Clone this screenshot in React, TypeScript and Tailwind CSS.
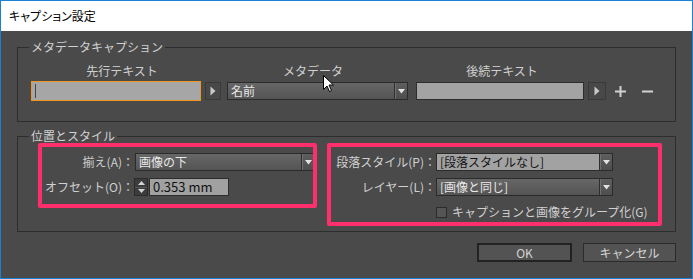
import React from 'react';

function DownTriangle() {
  return (
    <svg width="7" height="5" viewBox="0 0 7 5">
      <polygon points="0,0 7,0 3.5,4.5" fill="#e2e2e2" />
    </svg>
  );
}

function RightArrowButton({ className = '' }: { className?: string }) {
  return (
    <div
      className={`flex h-[18px] items-center justify-center border border-[#3a3a3a] bg-[#484848] ${className}`}
    >
      <svg width="6" height="10" viewBox="0 0 6 10">
        <polygon points="0.5,0.5 5.5,5 0.5,9.5" fill="#c9c9c9" />
      </svg>
    </div>
  );
}

function Dropdown({
  text,
  className = '',
  light = false,
}: {
  text: string;
  className?: string;
  light?: boolean;
}) {
  return (
    <div className={`flex h-[18px] border border-[#2b2b2b] ${className}`}>
      <div
        className={
          light
            ? 'flex flex-1 items-center bg-[#a2a2a2] pl-[3px] text-[12px] leading-[16px] text-[#161616]'
            : 'flex flex-1 items-center bg-gradient-to-b from-[#676767] to-[#545454] pl-[3px] text-[12px] leading-[16px] text-[#e8e8e8]'
        }
      >
        {text}
      </div>
      <div className="w-px bg-[#2e2e2e]" />
      <div className="w-px bg-[#707070]" />
      <div className="flex w-[11px] items-center justify-center bg-gradient-to-b from-[#5e5e5e] to-[#4e4e4e]">
        <DownTriangle />
      </div>
    </div>
  );
}

function Label({ children, className = '' }: { children: React.ReactNode; className?: string }) {
  return <div className={`text-[12px] leading-[16px] text-[#d0d0d0] ${className}`}>{children}</div>;
}

export default function App() {
  return (
    <div className="relative flex h-[279px] w-[693px] flex-col overflow-hidden border border-[#1a82d6] font-['Noto_Sans_CJK_JP',sans-serif]">
      {/* title bar */}
      <div className="flex h-[30px] items-center bg-white pl-2 text-[12px] leading-[16px] text-black [font-feature-settings:'palt']">
        キャプション設定
      </div>

      {/* body */}
      <div className="flex flex-1 flex-col bg-[#4a4a4a] px-4 pt-2">
        {/* metadata caption group */}
        <fieldset className="m-0 border border-[#2d2d2d] p-0 pb-[20px]">
          <legend className="ml-[11px] px-[2px] text-[12px] leading-4 text-[#d0d0d0]">
            メタデータキャプション
          </legend>
          <div className="mt-[8px] flex h-4">
            <Label className="ml-[13px] w-[182px] text-center">先行テキスト</Label>
            <Label className="ml-[14px] w-[172px] text-center">メタデータ</Label>
            <Label className="ml-[16px] w-[174px] text-center">後続テキスト</Label>
          </div>
          <div className="mt-[2px] flex h-[20px] items-center">
            <div className="ml-[13px] flex h-[20px] w-[170px] items-center border border-[#f0961e] bg-[#a6a6a6] pl-[3px]">
              <div className="h-[14px] w-px bg-[#474747]" />
            </div>
            <RightArrowButton className="ml-[4px] w-[16px]" />
            <Dropdown text="名前" className="ml-[6px] w-[181px]" />
            <div className="ml-[8px] h-[18px] w-[168px] border border-[#2d2d2d] bg-[#a3a3a3]" />
            <RightArrowButton className="ml-[4px] w-[18px]" />
            <svg className="ml-[9px]" width="11" height="11" viewBox="0 0 11 11">
              <rect x="0" y="4.5" width="11" height="2" fill="#d2d2d2" />
              <rect x="4.5" y="0" width="2" height="11" fill="#d2d2d2" />
            </svg>
            <svg className="ml-[16px]" width="11" height="11" viewBox="0 0 11 11">
              <rect x="0" y="4.5" width="11" height="2" fill="#d2d2d2" />
            </svg>
          </div>
        </fieldset>

        {/* position and style group */}
        <fieldset className="m-0 mt-[6px] border border-[#2d2d2d] p-0 pb-[10px]">
          <legend className="ml-[11px] px-[2px] text-[12px] leading-4 text-[#d0d0d0]">
            位置とスタイル
          </legend>
          <div className="flex pt-[9px]">
            {/* left column */}
            <div className="flex w-[308px] flex-col gap-[7px]">
              <div className="flex h-[18px] items-center">
                <Label className="w-[116px] text-right">揃え(A)：</Label>
                <Dropdown text="画像の下" className="ml-px w-[180px]" />
              </div>
              <div className="flex h-[18px] items-center">
                <Label className="w-[116px] text-right">オフセット(O)：</Label>
                <div className="flex h-[18px] w-[14px] flex-col border border-[#2b2b2b] bg-[#3c3c3c]">
                  <div className="flex flex-1 items-center justify-center">
                    <svg width="7" height="4" viewBox="0 0 7 4">
                      <polygon points="0,4 7,4 3.5,0" fill="#d4d4d4" />
                    </svg>
                  </div>
                  <div className="h-px bg-[#555555]" />
                  <div className="flex flex-1 items-center justify-center">
                    <svg width="7" height="4" viewBox="0 0 7 4">
                      <polygon points="0,0 7,0 3.5,4" fill="#d4d4d4" />
                    </svg>
                  </div>
                </div>
                <div className="ml-px flex h-[18px] w-[80px] items-center border border-[#2d2d2d] bg-[#a1a1a1] pl-[3px] text-[13px] leading-[16px] text-[#111111]">
                  0.353 mm
                </div>
              </div>
            </div>

            {/* right column */}
            <div className="flex flex-col gap-[7px]">
              <div className="flex h-[18px] items-center">
                <Label className="w-[110px] text-right">段落スタイル(P)：</Label>
                <Dropdown text="[段落スタイルなし]" light className="w-[177px]" />
              </div>
              <div className="flex h-[18px] items-center">
                <Label className="w-[110px] text-right">レイヤー(L)：</Label>
                <Dropdown text="[画像と同じ]" className="w-[177px]" />
              </div>
              <div className="flex h-[18px] items-center">
                <div className="ml-[110px] h-[11px] w-[11px] border border-[#2b2b2b] bg-[#555555]" />
                <Label className="ml-[5px]">キャプションと画像をグループ化(G)</Label>
              </div>
            </div>
          </div>
        </fieldset>

        {/* buttons */}
        <div className="mt-[11px] flex justify-end gap-[11px]">
          <button className="flex h-[19px] w-[95px] items-center justify-center border-2 border-[#222222] bg-[#535353] text-[12px] leading-[16px] text-[#d4d4d4]">
            OK
          </button>
          <button className="flex h-[19px] w-[93px] items-center justify-center border border-[#2b2b2b] bg-[#535353] text-[12px] leading-[16px] text-[#d4d4d4]">
            キャンセル
          </button>
        </div>
      </div>

      {/* annotation highlights */}
      <div className="absolute left-[37px] top-[142px] h-[65px] w-[279px] rounded-[2px] border-4 border-[#ff2f6e]" />
      <div className="absolute left-[326px] top-[142px] h-[83px] w-[335px] rounded-[2px] border-4 border-[#ff2f6e]" />

      {/* mouse pointer */}
      <svg className="absolute left-[322px] top-[74px]" width="12" height="18" viewBox="0 0 12 18">
        <path
          d="M0.5 0.5 V14.5 L4 11 L6.5 16.5 L8.5 15.5 L6 10 H10.5 Z"
          fill="#ffffff"
          stroke="#000000"
          strokeWidth="1"
          strokeLinejoin="miter"
        />
      </svg>
    </div>
  );
}
